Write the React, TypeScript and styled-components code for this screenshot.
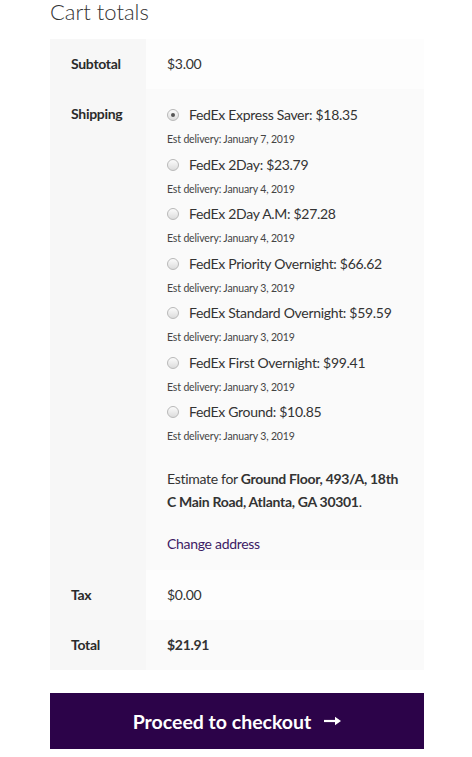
import React from "react";
import styled, { createGlobalStyle } from "styled-components";

const Global = createGlobalStyle`
  html, body { margin: 0; padding: 0; background: #ffffff; }
  body { font-family: Lato, "Open Sans", sans-serif; color: #333333; }
`;

const Page = styled.div`
  width: 374px;
  padding-left: 50px;
`;

const Title = styled.h2`
  margin: -3px 0 13px;
  font-size: 22px;
  line-height: 29px;
  font-weight: 300;
  letter-spacing: 0;
  color: #333333;
`;

const Table = styled.table`
  width: 374px;
  border-collapse: collapse;
  border-spacing: 0;
  font-size: 14px;
  letter-spacing: -0.3px;
`;

const Row = styled.tr<{ $even?: boolean }>`
  & > td { background: ${(p) => (p.$even ? "#fafafa" : "#fdfdfd")}; }
`;

const Head = styled.th`
  width: 96px;
  box-sizing: border-box;
  background: #f7f7f7;
  padding: 15px 0 15px 21px;
  text-align: left;
  vertical-align: top;
  font-weight: 700;
  line-height: 20px;
  color: #2b2b2b;
`;

const Cell = styled.td<{ $bold?: boolean }>`
  padding: 15px 21px;
  vertical-align: top;
  line-height: 20px;
  font-weight: ${(p) => (p.$bold ? 700 : 400)};
  color: #333333;
`;

const Options = styled.ul`
  list-style: none;
  margin: 0;
  padding: 0;
`;

const Option = styled.li`
  margin: 0;
  padding: 0;
`;

const OptionLabel = styled.label`
  display: flex;
  align-items: center;
  gap: 10px;
  line-height: 22px;
  white-space: nowrap;
  color: #333333;
`;

const Radio = styled.span<{ $checked?: boolean }>`
  position: relative;
  display: inline-block;
  width: 10px;
  height: 10px;
  border-radius: 50%;
  border: 1px solid #b9b9b9;
  background: linear-gradient(#fbfbfb, #dcdcdc);
  flex: 0 0 auto;
  &::after {
    content: "";
    display: ${(p) => (p.$checked ? "block" : "none")};
    position: absolute;
    left: 3px;
    top: 3px;
    width: 4px;
    height: 4px;
    border-radius: 50%;
    background: #555555;
  }
`;

const Est = styled.p`
  margin: 5px 0 5.5px;
  font-size: 10.5px;
  letter-spacing: -0.15px;
  line-height: 17px;
  color: #444444;
`;

const Estimate = styled.p`
  margin: 21.5px 0 0;
  line-height: 23px;
  color: #333333;
  strong { font-weight: 700; }
`;

const ChangeLink = styled.a`
  display: block;
  margin-top: 20.5px;
  line-height: 22px;
  color: #3d1a64;
  text-decoration: none;
`;

const Checkout = styled.a`
  display: flex;
  align-items: center;
  justify-content: center;
  gap: 13px;
  margin-top: 23px;
  width: 374px;
  height: 56px;
  background: #2c0349;
  color: #ffffff;
  font-size: 19.5px;
  letter-spacing: 0;
  font-weight: 700;
  text-decoration: none;
`;

const options = [
  { label: "FedEx Express Saver: $18.35", est: "Est delivery: January 7, 2019", checked: true },
  { label: "FedEx 2Day: $23.79", est: "Est delivery: January 4, 2019" },
  { label: "FedEx 2Day A.M: $27.28", est: "Est delivery: January 4, 2019" },
  { label: "FedEx Priority Overnight: $66.62", est: "Est delivery: January 3, 2019" },
  { label: "FedEx Standard Overnight: $59.59", est: "Est delivery: January 3, 2019" },
  { label: "FedEx First Overnight: $99.41", est: "Est delivery: January 3, 2019" },
  { label: "FedEx Ground: $10.85", est: "Est delivery: January 3, 2019" },
];

export default function App() {
  return (
    <>
      <Global />
      <Page>
        <Title>Cart totals</Title>
        <Table>
          <tbody>
            <Row>
              <Head>Subtotal</Head>
              <Cell>$3.00</Cell>
            </Row>
            <Row $even>
              <Head>Shipping</Head>
              <Cell>
                <Options>
                  {options.map((o) => (
                    <Option key={o.label}>
                      <OptionLabel>
                        <Radio $checked={o.checked} />
                        {o.label}
                      </OptionLabel>
                      <Est>{o.est}</Est>
                    </Option>
                  ))}
                </Options>
                <Estimate>
                  Estimate for <strong>Ground Floor, 493/A, 18th C Main Road, Atlanta, GA 30301</strong>.
                </Estimate>
                <ChangeLink href="#">Change address</ChangeLink>
              </Cell>
            </Row>
            <Row>
              <Head>Tax</Head>
              <Cell>$0.00</Cell>
            </Row>
            <Row $even>
              <Head>Total</Head>
              <Cell $bold>$21.91</Cell>
            </Row>
          </tbody>
        </Table>
        <Checkout href="#">
          Proceed to checkout
          <svg width="17" height="10" viewBox="0 0 17 10">
            <path d="M0 5 H12" stroke="#fff" strokeWidth="2.2" />
            <path d="M11 0.8 L17 5 L11 9.2 Z" fill="#fff" />
          </svg>
        </Checkout>
      </Page>
    </>
  );
}
